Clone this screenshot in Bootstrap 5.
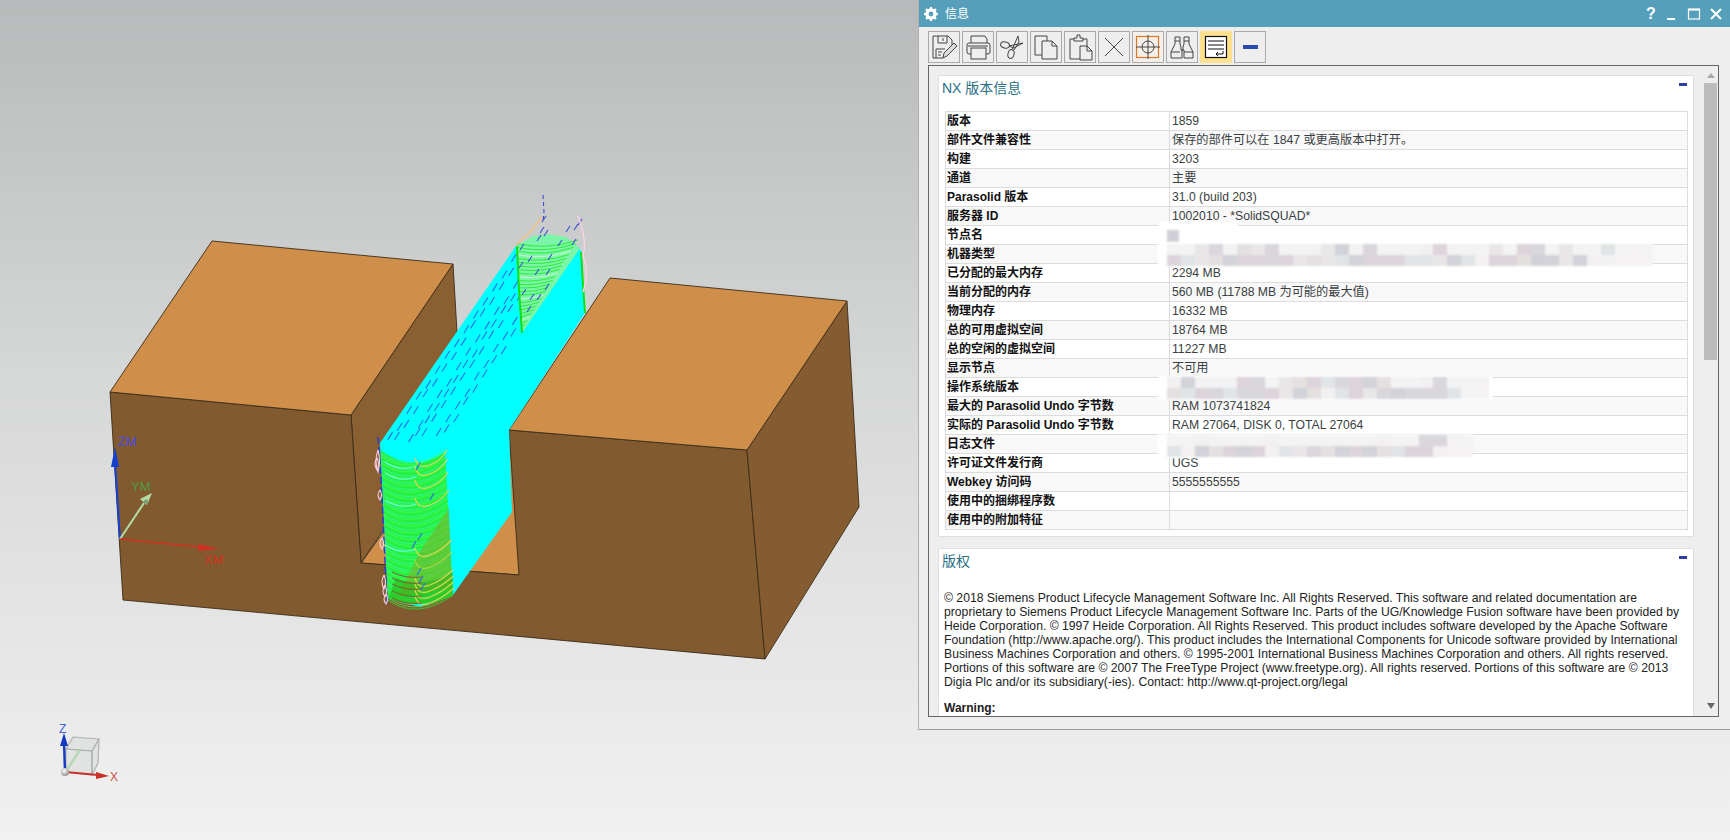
<!DOCTYPE html>
<html lang="zh-CN">
<head>
    <meta charset="UTF-8">
    <title>信息</title>
    <link href="https://cdn.jsdelivr.net/npm/bootstrap@5.3.2/dist/css/bootstrap.min.css" rel="stylesheet">
    <style>
        html, body {
            height: 840px;
            overflow: hidden;
        }
        body {
            background: linear-gradient(180deg, #b8b9ba 0%, #d6d7d7 45%, #f1f1f1 100%);
            font-family: "Liberation Sans", "Noto Sans CJK SC", sans-serif;
            font-size: 12px;
            color: #222;
        }
        .scene {
            width: 918px;
            height: 840px;
            flex: none;
        }
        .scene svg {
            display: block;
        }
        .info-win {
            width: 812px;
            height: 730px;
            background-color: #eeeeee;
            border-left: 1px solid #b0b0b0;
            border-bottom: 1px solid #9a9a9a;
        }
        .title-strip {
            height: 27px;
            padding-right: 3px;
            background-color: #559fbb;
            color: #fff;
            font-size: 12px;
        }
        .title-gear {
            margin: 0 6px 0 4px;
        }
        .win-ctl {
            width: 22px;
            text-align: center;
            line-height: 0;
        }
        .win-help {
            width: 20px;
            font-size: 16px;
            font-weight: 700;
            line-height: 1;
        }
        .tool-strip {
            height: 38px;
            padding: 4px 0 2px 9px;
            gap: 2px;
        }
        .tool-btn {
            width: 32px;
            height: 32px;
            padding: 0;
            border: 1px solid #a9a9a9;
            border-radius: 0;
            background-color: #eeeeee;
            line-height: 0;
        }
        .tool-btn svg {
            display: block;
        }
        .tool-on {
            background-color: #ffe08c;
            border-color: #ffe08c;
        }
        .tool-hot {
            background-color: #f4efe8;
        }
        .doc-frame {
            width: 791px;
            height: 652px;
            margin-left: 9px;
            border: 1px solid #666;
            background-color: #eeeeee;
        }
        .doc-body {
            width: 766px;
            height: 650px;
            padding: 9px 0 0 9px;
            gap: 11px;
            overflow: hidden;
        }
        .doc-panel {
            width: 756px;
            flex: none;
            background-color: #fff;
            border: 1px solid #dfdfdf;
            padding: 0 5px 6px 5px;
        }
        .panel-head {
            height: 35px;
            margin-left: -2px;
            color: #2a6f86;
            font-size: 14px;
            line-height: 24px;
        }
        .panel-head-tall {
            height: 42px;
        }
        .fold-mark {
            width: 8px;
            height: 3px;
            margin: 7px 1px 0 0;
            background-color: #2a3fa0;
        }
        .ver-table {
            width: 743px;
            margin: 0 0 0 1px;
            table-layout: fixed;
            border-collapse: collapse;
            font-size: 12px;
        }
        .ver-table th, .ver-table td {
            height: 19px;
            padding: 0 0 0 2px;
            border: 1px solid #dcdcdc;
            line-height: 17px;
            white-space: nowrap;
            background-color: #fff;
            vertical-align: middle;
        }
        .ver-table th {
            width: 224px;
            padding-left: 1px;
            color: #111;
            font-weight: 700;
        }
        .ver-table td {
            color: #3a3f42;
            font-size: 12.2px;
        }
        .ver-table tr:nth-child(even) th, .ver-table tr:nth-child(even) td {
            background-color: #f8f8f8;
        }
        .smudge {
            position: absolute;
            left: -12px;
            filter: blur(1.3px);
            pointer-events: none;
        }
        .legal-text {
            font-size: 12.2px;
            line-height: 14px;
            color: #222;
            white-space: nowrap;
        }
        .legal-warn {
            margin-top: 12px;
            font-weight: 700;
            line-height: 14px;
        }
        .doc-scroll {
            width: 23px;
            padding-left: 9px;
        }
        .scroll-up, .scroll-down {
            width: 0;
            height: 0;
            border-left: 4px solid transparent;
            border-right: 4px solid transparent;
            margin-left: 3px;
        }
        .scroll-up {
            margin-top: 7px;
            border-bottom: 5px solid #aaa;
        }
        .scroll-down {
            margin-bottom: 7px;
            border-top: 6px solid #666;
        }
        .scroll-thumb {
            width: 13px;
            height: 277px;
            margin-top: 5px;
            background-color: #bcbcbc;
        }
    </style>
</head>
<body class="m-0 d-flex">

<div class="scene">
    <svg id="model" width="918" height="840" viewBox="0 0 918 840">
        <defs>
            <radialGradient id="ball" cx="40%" cy="35%" r="70%">
                <stop offset="0" stop-color="#fff"/>
                <stop offset="1" stop-color="#8a8a8a"/>
            </radialGradient>
        </defs>
        <g stroke="#3a2c18" stroke-width="0.9" stroke-linejoin="round">
            <!-- slot floor and left wall -->
            <polygon points="361,563 519,575 600,450 450,440" fill="#cf8f4a"/>
            <polygon points="453,264 351,415 361,563 458,420 457,332" fill="#8a5f32"/>
            <!-- front face with the slot cut out -->
            <polygon points="110,392 351,415 361,563 519,575 509,430 747,450 765,659 123,600" fill="#825a30"/>
            <!-- right block -->
            <polygon points="847,301 859,507 765,659 747,450" fill="#855c31"/>
            <polygon points="610,278 847,301 747,450 509,430" fill="#cf8f4a"/>
            <!-- left block -->
            <polygon points="212,241 453,264 351,415 110,392" fill="#cf8f4a"/>
        </g>
        <!-- swept tool surface -->
        <polygon points="516,246 380,443 388,598 420,607 453,595 512,512 509,430 585,313 581,250 548,236" fill="#00ffff"/>
        <g id="sweepDashes" stroke="#2f6fe0" stroke-width="1.1"></g>
        <!-- far end of the tool path -->
        <polygon points="517,246 533,236 548,234 566,237 580,248 522,333" fill="#7df5a8"/>
        <g id="farArcs" fill="none" stroke-width="0.8"></g>
        <polyline points="517,246 519,290 522,333" fill="none" stroke="#10e010" stroke-width="2"/>
        <polyline points="581,252 583,285 585,313" fill="none" stroke="#10e010" stroke-width="2"/>
        <polyline points="516,245 530,232 543,216" fill="none" stroke="#ecc484" stroke-width="1.6"/>
        <g id="farDashes" stroke="#3c4fd8" stroke-width="1.1"></g>
        <path d="M578,216 C584,232 586,246 583,256 C588,268 587,282 583,292" fill="none" stroke="#f8d4e4" stroke-width="1.4"/>
        <!-- near end of the tool path -->
        <path d="M381,450 C396,462 420,470 445,452 L453,595 Q420,612 388,598 Z" fill="#28f048"/>
        <g id="nearArcs" fill="none" stroke-width="0.7"></g>
        <polygon points="419,553 449,508 452,588 398,596" fill="#93a020" opacity="0.45"/>
        <path d="M396,578 Q420,590 453,572 L453,595 Q420,612 388,598 Z" fill="#2aa80c" opacity="0.5"/>
        <g id="nearMarks" fill="none"></g>
        <!-- work coordinate triad -->
        <g>
            <line x1="120" y1="539" x2="115" y2="462" stroke="#1540d0" stroke-width="2"/>
            <polygon points="115,447 111,467 119,467" fill="#1540d0"/>
            <line x1="120" y1="539" x2="144" y2="503" stroke="#b5dca5" stroke-width="2"/>
            <polygon points="152,493 140,499 147,505" fill="#b5dca5"/>
            <circle cx="146" cy="502" r="2.4" fill="#7f9f78"/>
            <line x1="120" y1="539" x2="200" y2="547" stroke="#d03020" stroke-width="1.6"/>
            <polygon points="219,549 199,544 198,551" fill="#d03020"/>
            <text x="118" y="446" font-family="Liberation Sans" font-size="13" fill="#4a4ae0">ZM</text>
            <text x="131" y="491" font-family="Liberation Sans" font-size="13" fill="#4f9a40">YM</text>
            <text x="204" y="564" font-family="Liberation Sans" font-size="13" fill="#d03020">XM</text>
        </g>
        <!-- view triad -->
        <g>
            <g fill="#c8cbc9" fill-opacity="0.3" stroke="#aeb2b0" stroke-width="1.2" stroke-linejoin="round">
                <polygon points="73,737 99,739 92,751 66,749"/>
                <polygon points="66,749 92,751 92,775 66,772"/>
                <polygon points="92,751 99,739 98,763 92,775"/>
            </g>
            <line x1="66" y1="771" x2="80" y2="750" stroke="#b5d8b5" stroke-width="2.5"/>
            <line x1="65" y1="772" x2="64" y2="742" stroke="#1538c0" stroke-width="2.4"/>
            <polygon points="64,733 60,746 68,746" fill="#1538c0"/>
            <line x1="65" y1="772" x2="98" y2="775" stroke="#c83028" stroke-width="2.2"/>
            <polygon points="109,776 96,772 96,779" fill="#c83028"/>
            <circle cx="65" cy="772" r="4" fill="url(#ball)"/>
            <text x="59" y="733" font-family="Liberation Sans" font-size="12" fill="#4060d8">Z</text>
            <text x="110" y="781" font-family="Liberation Sans" font-size="12" fill="#d05048">X</text>
        </g>
    </svg>
</div>

<div class="info-win flex-shrink-0 d-flex flex-column">
    <div class="title-strip d-flex align-items-center">
        <svg class="title-gear" width="16" height="16" viewBox="0 0 16 16">
            <circle cx="8" cy="8" r="4.2" fill="none" stroke="#fff" stroke-width="3"/>
            <g stroke="#fff" stroke-width="2.2">
                <line x1="8" y1="1" x2="8" y2="15"/>
                <line x1="1" y1="8" x2="15" y2="8"/>
                <line x1="3" y1="3" x2="13" y2="13"/>
                <line x1="13" y1="3" x2="3" y2="13"/>
            </g>
            <circle cx="8" cy="8" r="2.4" fill="#559fbb"/>
        </svg>
        <span>信息</span>
        <div class="ms-auto d-flex align-items-center">
            <span class="win-ctl win-help">?</span>
            <span class="win-ctl"><svg width="14" height="14" viewBox="0 0 14 14"><rect x="2" y="11" width="8" height="2" fill="#fff"/></svg></span>
            <span class="win-ctl"><svg width="14" height="14" viewBox="0 0 14 14"><rect x="1.5" y="2" width="11" height="10" fill="none" stroke="#fff" stroke-width="1.2"/><rect x="1.5" y="2" width="11" height="1.6" fill="#fff"/></svg></span>
            <span class="win-ctl"><svg width="14" height="14" viewBox="0 0 14 14"><path d="M2 2 L12 12 M12 2 L2 12" stroke="#fff" stroke-width="2"/></svg></span>
        </div>
    </div>

    <div class="tool-strip d-flex">
        <button class="btn tool-btn" type="button" title="保存"><svg width="30" height="30" viewBox="0 0 30 30" fill="none" stroke="#444" stroke-width="1">
            <path d="M4 4h15l4 4v6M4 4v22h10"/><path d="M9 4v7h9V4M14 6v3"/><path d="M7 26v-9h9"/><path d="M14 26l1-5 10-10 3 3-10 10z" fill="#ddd"/><path d="M9 20h4M9 23h3"/>
        </svg></button>
        <button class="btn tool-btn" type="button" title="打印"><svg width="30" height="30" viewBox="0 0 30 30" fill="none" stroke="#444" stroke-width="1">
            <path d="M8 11V4h14l2 3v4"/><rect x="4" y="11" width="23" height="11" rx="2"/><rect x="8" y="16" width="15" height="11" fill="#eee"/><path d="M5 14h20"/>
        </svg></button>
        <button class="btn tool-btn" type="button" title="剪切"><svg width="30" height="30" viewBox="0 0 30 30" fill="none" stroke="#444" stroke-width="1">
            <ellipse cx="8" cy="13" rx="4.5" ry="3" transform="rotate(15 8 13)"/><ellipse cx="14" cy="22" rx="3" ry="4.5" transform="rotate(15 14 22)"/>
            <path d="M12 14l14-3-9 5zM15 18l6-14 1 6-5 8"/>
        </svg></button>
        <button class="btn tool-btn" type="button" title="复制"><svg width="30" height="30" viewBox="0 0 30 30" fill="none" stroke="#444" stroke-width="1">
            <path d="M4 4h12v19H4z"/><path d="M11 9h10l5 5v13H11z" fill="#eee"/><path d="M21 9v5h5"/>
        </svg></button>
        <button class="btn tool-btn" type="button" title="粘贴"><svg width="30" height="30" viewBox="0 0 30 30" fill="none" stroke="#444" stroke-width="1">
            <path d="M9 7H5v20h17V7h-4"/><path d="M9 9V6h3V3h3v3h3v3z" fill="#eee"/><path d="M15 14h7l5 5v9H15z" fill="#eee"/><path d="M22 14v5h5"/>
        </svg></button>
        <button class="btn tool-btn" type="button" title="删除"><svg width="30" height="30" viewBox="0 0 30 30" fill="none" stroke="#444" stroke-width="1">
            <path d="M6 6l18 18M24 6L6 24"/>
        </svg></button>
        <button class="btn tool-btn tool-hot" type="button" title="定位"><svg width="30" height="30" viewBox="0 0 30 30" fill="none">
            <rect x="3.5" y="4.5" width="22" height="21" stroke="#d8782a" stroke-width="1.2"/><circle cx="15" cy="15" r="6" stroke="#444"/><path d="M3 15h24M15 3v24" stroke="#444"/>
        </svg></button>
        <button class="btn tool-btn" type="button" title="查找"><svg width="30" height="30" viewBox="0 0 30 30" fill="none" stroke="#444" stroke-width="1">
            <path d="M8 5h5v7l1 3v3h2v-3l1-3V5h5v7l4 8v6h-9v-8h-2v8H4v-6l4-8z"/><path d="M4 20h9M17 20h9M8 9h5M17 9h5"/>
        </svg></button>
        <button class="btn tool-btn tool-on" type="button" title="自动换行"><svg width="30" height="30" viewBox="0 0 30 30" fill="none" stroke="#111" stroke-width="1">
            <rect x="4.5" y="4.5" width="21" height="21" fill="#fff" stroke-width="1.2"/><path d="M7 9h16M7 13h16M7 17h16"/>
            <path d="M22 19v3h-7M17 20l-2 2 2 2"/>
        </svg></button>
        <button class="btn tool-btn" type="button" title="折叠"><svg width="30" height="30" viewBox="0 0 30 30">
            <rect x="8" y="13" width="15" height="4" fill="#2a4bb0"/>
        </svg></button>
    </div>

    <div class="doc-frame d-flex">
        <div class="doc-body d-flex flex-column">
            <section class="doc-panel">
                <div class="panel-head d-flex justify-content-between align-items-start">
                    <span>NX 版本信息</span><span class="fold-mark"></span>
                </div>
                <table class="ver-table">
                    <tbody>
                        <tr><th>版本</th><td>1859</td></tr>
                        <tr><th>部件文件兼容性</th><td>保存的部件可以在 1847 或更高版本中打开。</td></tr>
                        <tr><th>构建</th><td>3203</td></tr>
                        <tr><th>通道</th><td>主要</td></tr>
                        <tr><th>Parasolid 版本</th><td>31.0 (build 203)</td></tr>
                        <tr><th>服务器 ID</th><td>1002010 - *SolidSQUAD*</td></tr>
                        <tr><th>节点名</th><td class="position-relative"><svg class="smudge" data-x="1" data-gap="14" width="80" height="22" style="top:-4px"></svg></td></tr>
                        <tr><th>机器类型</th><td class="position-relative"><svg class="smudge" data-x="40" width="495" height="24" style="top:-2px"></svg></td></tr>
                        <tr><th>已分配的最大内存</th><td>2294 MB</td></tr>
                        <tr><th>当前分配的内存</th><td>560 MB (11788 MB 为可能的最大值)</td></tr>
                        <tr><th>物理内存</th><td>16332 MB</td></tr>
                        <tr><th>总的可用虚拟空间</th><td>18764 MB</td></tr>
                        <tr><th>总的空闲的虚拟空间</th><td>11227 MB</td></tr>
                        <tr><th>显示节点</th><td>不可用</td></tr>
                        <tr><th>操作系统版本</th><td class="position-relative"><svg class="smudge" data-x="27" width="335" height="24" style="top:-2px"></svg></td></tr>
                        <tr><th>最大的 Parasolid Undo 字节数</th><td>RAM 1073741824</td></tr>
                        <tr><th>实际的 Parasolid Undo 字节数</th><td>RAM 27064, DISK 0, TOTAL 27064</td></tr>
                        <tr><th>日志文件</th><td class="position-relative"><svg class="smudge" data-x="25" width="315" height="24" style="top:-1px"></svg></td></tr>
                        <tr><th>许可证文件发行商</th><td>UGS</td></tr>
                        <tr><th>Webkey 访问码</th><td>5555555555</td></tr>
                        <tr><th>使用中的捆绑程序数</th><td></td></tr>
                        <tr><th>使用中的附加特征</th><td></td></tr>
                    </tbody>
                </table>
            </section>
            <section class="doc-panel">
                <div class="panel-head panel-head-tall d-flex justify-content-between align-items-start">
                    <span>版权</span><span class="fold-mark"></span>
                </div>
                <div class="legal-text">
                    © 2018 Siemens Product Lifecycle Management Software Inc. All Rights Reserved. This software and related documentation are<br>
                    proprietary to Siemens Product Lifecycle Management Software Inc. Parts of the UG/Knowledge Fusion software have been provided by<br>
                    Heide Corporation. © 1997 Heide Corporation. All Rights Reserved. This product includes software developed by the Apache Software<br>
                    Foundation (http://www.apache.org/). This product includes the International Components for Unicode software provided by International<br>
                    Business Machines Corporation and others. © 1995-2001 International Business Machines Corporation and others. All rights reserved.<br>
                    Portions of this software are © 2007 The FreeType Project (www.freetype.org). All rights reserved. Portions of this software are © 2013<br>
                    Digia Plc and/or its subsidiary(-ies). Contact: http://www.qt-project.org/legal
                </div>
                <div class="legal-warn">Warning:</div>
            </section>
        </div>
        <div class="doc-scroll d-flex flex-column">
            <div class="scroll-up"></div>
            <div class="scroll-thumb"></div>
            <div class="scroll-down mt-auto"></div>
        </div>
    </div>
</div>

<script>
    const NS = 'http://www.w3.org/2000/svg';
    let seed = 7;
    function rnd() {
        seed = (seed * 16807) % 2147483647;
        return seed / 2147483647;
    }
    function add(parent, tag, attrs) {
        const el = document.createElementNS(NS, tag);
        for (const k in attrs) el.setAttribute(k, attrs[k]);
        parent.appendChild(el);
        return el;
    }

    // blue feed marks along the swept surface
    const sweep = document.getElementById('sweepDashes');
    [0.08, 0.16, 0.36, 0.44, 0.52, 0.72, 0.82].forEach(function(across, i) {
        for (let t = 0.02 + i * 0.013; t < 0.98; t += 0.07) {
            const x = 380 + 136 * t + 62 * across;
            const y = 443 - 197 * t + 10 * across + rnd() * 5;
            if (y > 500 - across * 60 || y < 250) continue;
            if (x > 520 && y < 335) continue;
            add(sweep, 'line', {x1: x, y1: y, x2: x + 5, y2: y - 8});
        }
    });

    // far end arcs
    const far = document.getElementById('farArcs');
    for (let i = 0; i < 24; i++) {
        const k = i / 24;
        const y = 240 + 88 * k;
        const l = 518 + 3 * k, r = 578 - 55 * k;
        add(far, 'path', {
            d: `M${l},${y + 4} Q${(l + r) / 2},${y + 10 * (1 - k)} ${r},${y}`,
            stroke: i % 6 == 3 ? '#d8f8d8' : '#18ea18'
        });
    }
    const farMarks = document.getElementById('farDashes');
    [[542,222],[540,233],[537,241],[520,250],[544,236],[528,262],[519,268],[566,232],[578,225],[574,230],[558,246],[548,260],[572,245],[535,275],[546,275],[522,295],[530,300],[545,290],[527,312],[537,300]].forEach(function(p) {
        add(farMarks, 'line', {x1: p[0], y1: p[1], x2: p[0] + 4, y2: p[1] - 6});
    });
    add(farMarks, 'polyline', {points: '543,195 544,212 543,222', fill: 'none', 'stroke-dasharray': '4 3'});

    // near end arcs
    const near = document.getElementById('nearArcs');
    for (let i = 0; i < 66; i++) {
        const y = 452 + i * 2.25;
        const l = 381 + (y - 443) * 0.045, r = 445 + (y - 452) * 0.055;
        add(near, 'path', {
            d: `M${l},${y + 2} Q${(l + r) / 2 - 4},${y + 22} ${r},${y - 3}`,
            stroke: i % 3 == 0 ? '#30f8b0' : (i % 3 == 1 ? '#48ff50' : '#22f030')
        });
    }

    // retract loops and highlighted passes on the near end
    const marks = document.getElementById('nearMarks');
    [[462,'#6fffe0'],[473,'#6fffe0'],[500,'#70ffe8'],[545,'#70ffe8']].forEach(function(a) {
        add(marks, 'path', {d: `M385,${a[0]} Q400,${a[0] + 10} 416,${a[0] + 4}`, stroke: a[1], 'stroke-width': 1.1});
    });
    [[458,1],[467,1],[480,1],[498,1],[548,1],[560,0.6],[578,1],[584,1],[590,1],[596,1]].forEach(function(a) {
        const y = a[0];
        add(marks, 'path', {d: `M415,${y} Q418,${y + 12} 430,${y + 7} Q441,${y + 3} ${447 + (y - 458) * 0.05},${y - 8}`, stroke: '#d8d850', 'stroke-width': 1.2, opacity: a[1]});
    });
    [572,578,584,591,598].forEach(function(y) {
        add(marks, 'path', {d: `M392,${y} Q405,${y + 7} 422,${y + 5}`, stroke: '#80602a', 'stroke-width': 1});
    });
    add(marks, 'path', {d: 'M378,437 L381,480 L384,540 L387,605', stroke: '#1c40d8', 'stroke-width': 1.4, 'stroke-dasharray': '7 3'});
    [[378,450,22],[377,458,12],[380,490,10],[382,538,11],[384,575,14],[385,585,12],[386,594,10]].forEach(function(a) {
        add(marks, 'path', {d: `M${a[0]},${a[1]} q-4,${a[2] / 2} 0,${a[2]} q3,-${a[2] / 2} 0,-${a[2]}`, stroke: '#f6cfe0', 'stroke-width': 1.1});
    });
    [[417,575],[419,583],[421,590],[416,470],[430,500],[418,540],[412,548]].forEach(function(p) {
        add(marks, 'line', {x1: p[0], y1: p[1], x2: p[0] + 4, y2: p[1] - 7, stroke: '#2f6fe0', 'stroke-width': 1.2});
    });

    // pixelated patches that hide the machine details
    const tints = ['#d9d6dc', '#e9e6e8', '#f2f0f0', '#d2d2d9', '#e4e0e0', '#e0e4e6', '#dcd4da'];
    document.querySelectorAll('.smudge').forEach(function(svg) {
        const w = +svg.getAttribute('width'), h = +svg.getAttribute('height');
        add(svg, 'rect', {x: 0, y: 0, width: w, height: h, fill: '#fff'});
        if (svg.dataset.gap) {
            add(svg, 'rect', {x: 9, y: 8, width: 12, height: 12, fill: '#cfcfd6'});
            return;
        }
        for (let x = 9; x < w - 6; x += 14) {
            for (let r = 0; r < 2; r++) {
                const fade = x > w - 40 ? '#f4f2f2' : tints[Math.floor(rnd() * tints.length)];
                add(svg, 'rect', {x: x, y: 1 + r * 11, width: 14, height: 11, fill: r == 0 && rnd() > 0.5 ? '#f4f3f3' : fade});
            }
        }
    });
</script>

<script src="https://cdn.jsdelivr.net/npm/bootstrap@5.3.2/dist/js/bootstrap.bundle.min.js"></script>
</body>
</html>
